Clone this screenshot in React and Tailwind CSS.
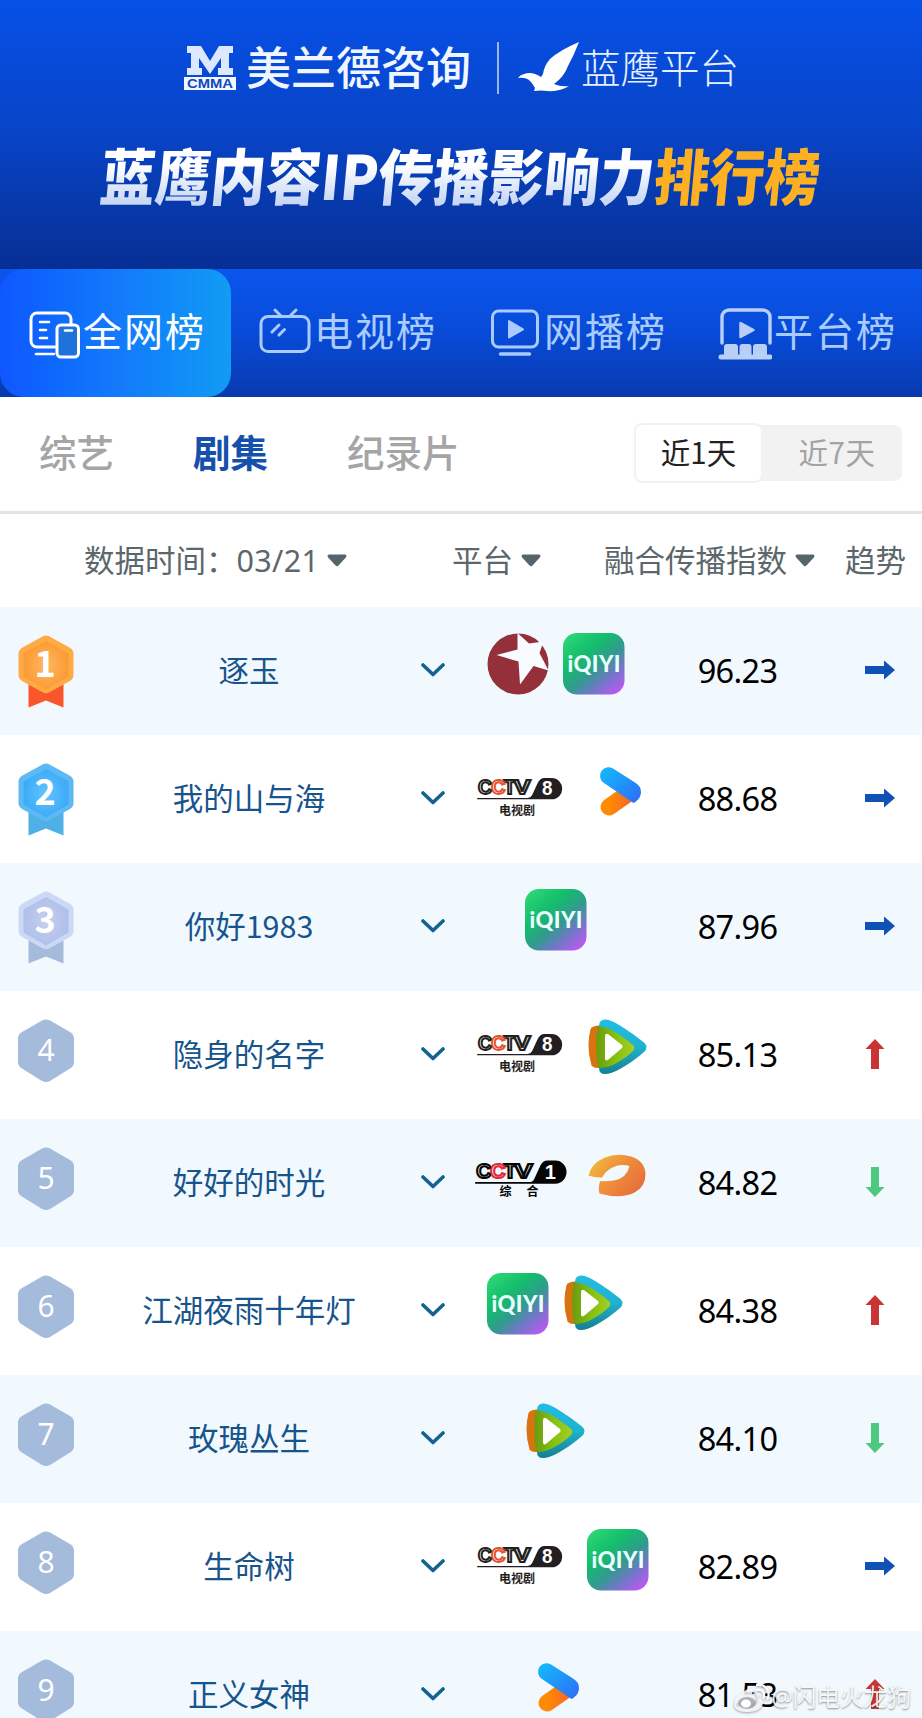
import { useState } from "react";

const navTabs = [
  { key: "all", label: "全网榜" },
  { key: "tv", label: "电视榜" },
  { key: "web", label: "网播榜" },
  { key: "platform", label: "平台榜" },
];

const rows = [
  { name: "逐玉", platforms: ["dragon", "iqiyi"], score: "96.23", trend: "flat" },
  { name: "我的山与海", platforms: ["cctv8", "youku"], score: "88.68", trend: "flat" },
  { name: "你好1983", platforms: ["iqiyi"], score: "87.96", trend: "flat" },
  { name: "隐身的名字", platforms: ["cctv8", "tencent"], score: "85.13", trend: "up" },
  { name: "好好的时光", platforms: ["cctv1", "mango"], score: "84.82", trend: "down" },
  { name: "江湖夜雨十年灯", platforms: ["iqiyi", "tencent"], score: "84.38", trend: "up" },
  { name: "玫瑰丛生", platforms: ["tencent"], score: "84.10", trend: "down" },
  { name: "生命树", platforms: ["cctv8", "iqiyi"], score: "82.89", trend: "flat" },
  { name: "正义女神", platforms: ["youku"], score: "81.53", trend: "up" },
];

const medals = [
  { rim: "#ffab45", from: "#ffb765", to: "#fb9b33", ribbon: "#f9562c" },
  { rim: "#5cb9f4", from: "#62c4ff", to: "#3dabf8", ribbon: "#4fb0e6" },
  { rim: "#cbd9f6", from: "#c6cff0", to: "#b0c0e8", ribbon: "#a4bbdc" },
];

function NavIcon({ type }) {
  const line = {
    fill: "none",
    stroke: "currentColor",
    strokeWidth: 3,
    strokeLinecap: "round",
    strokeLinejoin: "round",
  };
  return (
    <svg className="h-[54px] w-[54px] shrink-0" viewBox="0 0 54 54">
      {type === "all" && (
        <g {...line}>
          <path d="M28 41H10a6 6 0 0 1-6-6V13a6 6 0 0 1 6-6h28a6 6 0 0 1 6 6v5" />
          <path d="M13 16h9M13 24h6M13 32h7M9 48h18" strokeWidth="2.6" />
          <rect x="30" y="19" width="21.500" height="32" rx="4" fill="#1f72dc" />
          <path d="M38 24.500h7" strokeWidth="2.4" />
        </g>
      )}
      {type === "tv" && (
        <g {...line}>
          <rect x="3" y="10.500" width="48" height="35" rx="7" />
          <path d="M17 4l6.500 6.500M38 4l-6.500 6.500M14 26l7-7M21 29l5.500-5.500" />
        </g>
      )}
      {type === "web" && (
        <g {...line}>
          <rect x="4.500" y="5" width="45" height="36" rx="6" />
          <path d="M12.500 48h29" strokeWidth="3.400" />
          <path d="M21 15v16.500l14-8.200z" fill="currentColor" strokeWidth="2" />
        </g>
      )}
      {type === "platform" && (
        <g {...line} strokeWidth="3.400" className="text-[#b9cff8]">
          <path d="M4 37V11a7 7 0 0 1 7-7h34a7 7 0 0 1 7 7v26" />
          <path d="M22.500 17v14l13-7z" fill="currentColor" strokeWidth="2.500" />
          <path
            d="M6 51V41q0-3 3-3h8q3 0 3 3v9h1.500v-9q0-3 3-3h6q3 0 3 3v9H35v-9q0-3 3-3h8q3 0 3 3v10z"
            fill="currentColor"
            stroke="none"
          />
          <path d="M3 51h49" strokeWidth="5" />
        </g>
      )}
    </svg>
  );
}

function Badge({ rank }) {
  const medal = medals[rank - 1];
  if (!medal) {
    return (
      <svg className="h-[76px] w-[60px]" viewBox="0 0 60 76">
        <path
          d="M26 1.500q4-2 8 0l20 11.500q4 2.500 4 6.500v23.500q0 4-4 6.500L34 62q-4 2-8 0L6 49.500q-4-2.500-4-6.500V19.500q0-4 4-6.500z"
          fill="#a4bbdb"
        />
        <text
          x="30"
          y="42"
          textAnchor="middle"
          fontSize="30"
          fill="#fff"
          fontFamily="Noto Sans, sans-serif"
        >
          {rank}
        </text>
      </svg>
    );
  }
  return (
    <svg className="h-[76px] w-[60px]" viewBox="0 0 60 76">
      <defs>
        <radialGradient id={`medal${rank}`}>
          <stop offset="0" stopColor={medal.from} />
          <stop offset="1" stopColor={medal.to} />
        </radialGradient>
      </defs>
      <path d="M12.500 46h35v26.500L30 65.500l-17.500 7z" fill={medal.ribbon} />
      <path
        d="M26.500 1.500q3.500-2 7 0l20 11q4 2.300 4 6v21.500q0 4-4 6.300l-20 11q-3.500 2-7 0l-20-11q-4-2.300-4-6.300V18.500q0-3.700 4-6z"
        fill={medal.rim}
      />
      <path
        d="M30 6l22.500 12.500v23L30 54.500 7.500 41.500v-23z"
        fill={`url(#medal${rank})`}
      />
      <text
        x="29"
        y="42"
        textAnchor="middle"
        fontSize="36"
        fontWeight="700"
        fill="#fff"
        fontFamily="Noto Sans CJK SC, sans-serif"
      >
        {rank}
      </text>
    </svg>
  );
}

function Cctv({ number, label }) {
  const one = number === "1";
  const ink = one ? "#050505" : "#231f20";
  const red = one ? "#e02a3a" : "#e2552f";
  return (
    <svg className="h-[62px] w-[110px]" viewBox="0 0 110 62">
      <g
        transform={
          one ? "translate(-2 -1.800) scale(1.010 1.050)" : "translate(1 1) scale(0.940 0.970)"
        }
      >
        <g
          fontFamily="Liberation Sans, sans-serif"
          fontSize="20"
          fontWeight="700"
          fill="#fff"
          stroke={ink}
          strokeWidth="2"
        >
          <text x="15" y="33" textLength="15" lengthAdjust="spacingAndGlyphs">C</text>
          <text x="42" y="33" textLength="13" lengthAdjust="spacingAndGlyphs">T</text>
          <text x="53" y="33" textLength="18" lengthAdjust="spacingAndGlyphs">V</text>
          <text x="29" y="33" textLength="15" lengthAdjust="spacingAndGlyphs" stroke={red}>
            C
          </text>
        </g>
        <path
          d="M14 37h54q3 0 4.500-3l6-12.500q2.500-5 7-5h8a11 11 0 0 1 0 22H14z"
          fill={ink}
        />
        <text
          x="88.500"
          y="34.500"
          textAnchor="middle"
          fontFamily="Liberation Sans, sans-serif"
          fontSize="20"
          fontWeight="700"
          fill="#fff"
        >
          {number}
        </text>
      </g>
      <text
        x={one ? 36.500 : 36}
        y={one ? 50.500 : 54}
        textLength={one ? 39 : 36}
        fontFamily="Noto Sans CJK SC, sans-serif"
        fontSize="12"
        fontWeight="700"
        fill={ink}
      >
        {label}
      </text>
    </svg>
  );
}

function PlatformLogo({ type, id }) {
  switch (type) {
    case "cctv8":
      return <Cctv number="8" label="电视剧" />;
    case "cctv1":
      return <Cctv number="1" label="综 合" />;
    case "dragon":
      return (
        <svg className="size-[62px]" viewBox="0 0 62 62">
          <circle cx="31" cy="31" r="30.500" fill="#94303a" />
          <path
            d="M30.500 0L42 10.500 56.500 8.500 52.500 20 61.500 37.500 46.500 33 33 51.500 31.500 28.500 9.500 22 30.500 16.500z"
            fill="#f8fbff"
          />
        </svg>
      );
    case "iqiyi":
      return (
        <svg className="size-[62px]" viewBox="0 0 62 62">
          <defs>
            <linearGradient id={`${id}-q`} x1="0.100" y1="0.050" x2="0.900" y2="1">
              <stop offset="0" stopColor="#2cd573" />
              <stop offset="0.300" stopColor="#13bd6c" />
              <stop offset="0.550" stopColor="#319b8e" />
              <stop offset="0.750" stopColor="#7277c8" />
              <stop offset="1" stopColor="#c255f5" />
            </linearGradient>
          </defs>
          <rect x="0" y="0" width="61.500" height="61.500" rx="14" fill={`url(#${id}-q)`} />
          <text
            x="4.500"
            y="38.500"
            textLength="53"
            fontFamily="Lato, sans-serif"
            fontSize="22"
            fontWeight="900"
            fill="#e9fffb"
          >
            iQIYI
          </text>
        </svg>
      );
    case "youku":
      return (
        <svg className="size-[62px]" viewBox="0 0 62 62">
          <defs>
            <linearGradient id={`${id}-y`} x1="0" y1="0" x2="1" y2="1">
              <stop offset="0" stopColor="#12bdfc" />
              <stop offset="1" stopColor="#2f6bf5" />
            </linearGradient>
            <linearGradient id={`${id}-o`} x1="0" y1="0" x2="1" y2="0">
              <stop offset="0" stopColor="#ff8a05" />
              <stop offset="1" stopColor="#fb6a22" />
            </linearGradient>
          </defs>
          <path d="M22 46L42 32" fill="none" stroke={`url(#${id}-o)`} strokeWidth="17" strokeLinecap="round" />
          <path
            d="M26 7.500L48 21.500q6 3.500 6 9.500 0 5-4 8.500-1.500 1.500-3.500 2.500L17 22a8.300 8.300 0 0 1 9-14.500z"
            fill={`url(#${id}-y)`}
          />
        </svg>
      );
    case "tencent":
      return (
        <svg className="size-[62px]" viewBox="0 0 62 62">
          <defs>
            <linearGradient id={`${id}-b`} x1="0" y1="0" x2="0" y2="1">
              <stop offset="0" stopColor="#22bce4" />
              <stop offset="0.500" stopColor="#1fb2cf" />
              <stop offset="1" stopColor="#14808f" />
            </linearGradient>
            <linearGradient id={`${id}-g`} x1="0" y1="0" x2="1" y2="0">
              <stop offset="0" stopColor="#6b9a10" />
              <stop offset="0.500" stopColor="#86c00f" />
              <stop offset="1" stopColor="#a3cf22" />
            </linearGradient>
          </defs>
          <path
            d="M12 9q0-7 7-6.500 5 .5 14 6 13 8 24 17 5 4.500 0 9.500-10 9-24 17-9 5-15 5-6 0-6-6z"
            fill={`url(#${id}-b)`}
          />
          <path d="M3.500 12q2-3.500 9-3.500l3 20-2 22q-7 1.500-9-2Q-1 30 3.500 12z" fill="#d9730f" />
          <path
            d="M10.500 9.500q8-1 20 7 9 6 15 11 4 3 0 7-6 6-16 11.500-8 5-18.500 5-3.500-21-.5-41.500z"
            fill={`url(#${id}-g)`}
          />
          <path d="M18 19.500q0-4 3.500-2L35 28q1.500 1.500 0 3L21.500 42.500Q18 45 18 41z" fill="#fff" />
        </svg>
      );
    case "mango":
      return (
        <svg className="size-[62px]" viewBox="0 0 62 62">
          <defs>
            <linearGradient id={`${id}-m`} x1="0" y1="0" x2="1" y2="0.600">
              <stop offset="0" stopColor="#f2c43c" />
              <stop offset="0.450" stopColor="#f0963c" />
              <stop offset="1" stopColor="#e8703a" />
            </linearGradient>
          </defs>
          <path
            d="M1.500 31Q4 18 18 12.500 31 7.500 44 11.500q14 4.500 14.500 17.500 0 13-11 18.500-14 7-35 1-1.500-5 .5-12.500 5 .800 14-.500 13-2.500 15.500-14.500-9-2.500-17 1.500-7 3.500-10.500 10-6.500.5-13.500-2z"
            fill={`url(#${id}-m)`}
          />
        </svg>
      );
    default:
      return null;
  }
}

function Trend({ trend }) {
  if (trend === "flat") {
    return (
      <svg className="h-[20px] w-[30px]" viewBox="0 0 30 20">
        <path d="M0 6h19V0.500L30 10 19 19.500V14H0z" fill="#0f51b5" />
      </svg>
    );
  }
  if (trend === "up") {
    return (
      <svg className="h-[30px] w-[20px]" viewBox="0 0 20 30">
        <path d="M10 0l9.500 10h-5.500v20H6V10H.5z" fill="#c93437" />
      </svg>
    );
  }
  return (
    <svg className="h-[30px] w-[20px]" viewBox="0 0 20 30">
      <path d="M10 30L.5 20H6V0h8v20h5.500z" fill="#4cc97f" />
    </svg>
  );
}

function Caret() {
  return (
    <svg className="h-[13px] w-[20px] shrink-0" viewBox="0 0 20 13">
      <path d="M2 0.500h16q2.500.5.800 3L11.500 11.500q-1.500 1.500-3 0L1.200 3.500Q-.5 1 2 .5z" fill="#56646b" />
    </svg>
  );
}

function Watermark() {
  return (
    <div className="absolute right-[11px] bottom-[4px] flex items-center text-[24px] leading-[34px] text-white/90 [text-shadow:0_1px_2px_rgba(0,0,0,0.45)]">
      <svg className="mr-[1px] h-[32px] w-[38px] drop-shadow-[0_1px_1px_rgba(0,0,0,0.4)]" viewBox="0 0 38 32">
        <path
          d="M14 9q4-3 6 0 1 2 0 4 5-2 7 0 1.500 1.500 0 4 5 2 4 6-2 7-14 8-13 .5-15-6Q1 16 14 9z"
          fill="#fff"
          fillOpacity="0.85"
        />
        <ellipse cx="15" cy="22" rx="9" ry="6" fill="#7d8790" fillOpacity="0.6" />
        <ellipse cx="14" cy="22.500" rx="5" ry="4" fill="#fff" />
        <path
          d="M25 9q4-1 6 2t.5 6M25 4q7-1 10 4t.5 10"
          fill="none"
          stroke="#fff"
          strokeWidth="2.200"
          strokeLinecap="round"
        />
      </svg>
      <span className="tracking-[-0.3px]">@闪电火龙狗</span>
    </div>
  );
}

function App() {
  const [activeNav, setActiveNav] = useState("all");
  const [range, setRange] = useState(1);

  return (
    <div className="relative h-[1718px] w-[922px] overflow-hidden bg-white font-['Noto_Sans','Noto_Sans_CJK_SC',sans-serif]">
      <header className="flex h-[269px] flex-col items-center bg-linear-to-b from-[#0650e8] via-[#0844c6] to-[#062f94] pt-[36px] text-white">
        <div className="flex h-[64px] w-full items-center pl-[184px]">
          <svg className="h-[46px] w-[52px] shrink-0" viewBox="0 0 52 46">
            <path
              d="M3 1h14l9 15L35 1h14v7h-4v15h4v7H34v-7h3V13L26 29 15 13v10h3v7H3v-7h4V8H3z"
              fill="#dbe8ff"
            />
            <rect x="0" y="32" width="52" height="13" fill="#f2f7ff" />
            <text
              x="3"
              y="43"
              textLength="46"
              lengthAdjust="spacingAndGlyphs"
              fontFamily="Liberation Sans, sans-serif"
              fontSize="12"
              fontWeight="700"
              fill="#1048c0"
            >
              CMMA
            </text>
          </svg>
          <span className="ml-[10px] w-[227px] shrink-0 text-[45px] leading-[64px] font-medium whitespace-nowrap text-[#f0f6ff]">
            美兰德咨询
          </span>
          <span className="ml-[24px] h-[52px] w-[2px] bg-white/60" />
          <svg className="ml-[18px] h-[54px] w-[66px] shrink-0" viewBox="0 0 66 54">
            <path
              d="M62 1Q43 9 33 18q-6 7-7 15l-2 3Q15 30 7 33q-4 1-6 4 8-1 12 3 3 3 5 7l-1 3q7-1 13 0 13 1 22-5-8 1-15-2 10-7 14-18Q57 14 62 1z"
              fill="#fff"
            />
          </svg>
          <span className="ml-[-2px] text-[39.500px] leading-[62px] font-light whitespace-nowrap text-[#e6f0ff]">
            蓝鹰平台
          </span>
        </div>
        <h1 className="mt-[30px] flex h-[88px] origin-center -skew-x-6 scale-x-[0.905] items-center font-['Noto_Sans_CJK_SC',sans-serif] text-[61px] font-black whitespace-nowrap">
          <span className="bg-linear-to-b from-white from-40% to-[#c9d8f5] to-80% bg-clip-text text-transparent">
            蓝鹰内容IP传播影响力
          </span>
          <span className="text-[#fdb022]">排行榜</span>
        </h1>
      </header>

      <nav className="flex h-[128px] bg-linear-to-b from-[#0b55ee] via-[#084bd8] to-[#083aae]">
        {navTabs.map((tab) => (
          <button
            key={tab.key}
            onClick={() => setActiveNav(tab.key)}
            className={
              activeNav === tab.key
                ? "flex w-[231px] items-center rounded-[24px] bg-linear-to-r from-[#1057ff] via-[#1479fb] to-[#139bf4] pl-[27px] text-white"
                : "flex w-[230px] items-center pl-[27px] text-[#a9cbff]"
            }
          >
            <NavIcon type={tab.key} />
            <span className="mb-[4px] ml-[2px] text-[39px] leading-[60px] tracking-[2px]">
              {tab.label}
            </span>
          </button>
        ))}
      </nav>

      <div className="flex h-[117px] items-center border-b-[3px] border-[#e4e4e4] pr-[20px] pb-[2px] pl-[39px] text-[37.500px] font-medium text-[#a5a5a5]">
        <span>综艺</span>
        <span className="ml-[79px] font-bold text-[#1650ad]">剧集</span>
        <span className="ml-[79px]">纪录片</span>
        <div className="ml-auto flex h-[56px] w-[268px] items-center rounded-lg bg-[#f2f2f2] font-['Noto_Sans_CJK_SC',sans-serif] text-[29.500px] font-normal">
          <button
            onClick={() => setRange(1)}
            className="h-[60px] w-[129px] rounded-lg border-2 border-[#f2f2f2] bg-white pb-[3px] text-[#222]"
          >
            近1天
          </button>
          <button
            onClick={() => setRange(7)}
            className="flex-1 pb-[3px] pl-[9px] tracking-[0.5px] text-[#a3a3a3]"
          >
            近7天
          </button>
        </div>
      </div>

      <div className="flex h-[93px] items-center pl-[84px] text-[30.500px] text-[#5c676c]">
        <div className="flex w-[368px] items-center gap-[8px]">
          <span>
            数据时间：<span className="tracking-[0.300px]">03/21</span>
          </span>
          <Caret />
        </div>
        <div className="flex w-[152px] items-center gap-[8px]">
          <span>平台</span>
          <Caret />
        </div>
        <div className="flex w-[241px] items-center gap-[8px]">
          <span>融合传播指数</span>
          <Caret />
        </div>
        <span>趋势</span>
      </div>

      {rows.map((row, index) => (
        <div
          key={row.name}
          className={index % 2 === 0 ? "flex h-[128px] bg-[#f2f9fe]" : "flex h-[128px] bg-white"}
        >
          <div className="w-[92px] shrink-0 pt-[28px] pl-[16px]">
            <Badge rank={index + 1} />
          </div>
          <div className="w-[314px] shrink-0 text-center font-['Noto_Sans_CJK_SC',sans-serif] text-[30.500px] leading-[124px] text-[#17548c]">
            {row.name}
          </div>
          <div className="flex w-[54px] shrink-0 justify-center pt-[56px]">
            <svg className="h-[14px] w-[24px]" viewBox="0 0 24 14">
              <path
                d="M2 2l10 9.500L22 2"
                fill="none"
                stroke="#126392"
                strokeWidth="3.600"
                strokeLinecap="round"
                strokeLinejoin="round"
              />
            </svg>
          </div>
          <div className="flex w-[191px] shrink-0 justify-center gap-[14px] pt-[26px]">
            {row.platforms.map((platform) => (
              <PlatformLogo key={platform} type={platform} id={`p${index}`} />
            ))}
          </div>
          <div className="w-[173px] shrink-0 text-center text-[32.500px] leading-[128px] tracking-[-0.700px] text-black">
            {row.score}
          </div>
          <div className="flex h-[126px] items-center pl-[41px]">
            <Trend trend={row.trend} />
          </div>
        </div>
      ))}

      <Watermark />
    </div>
  );
}

export default App;
